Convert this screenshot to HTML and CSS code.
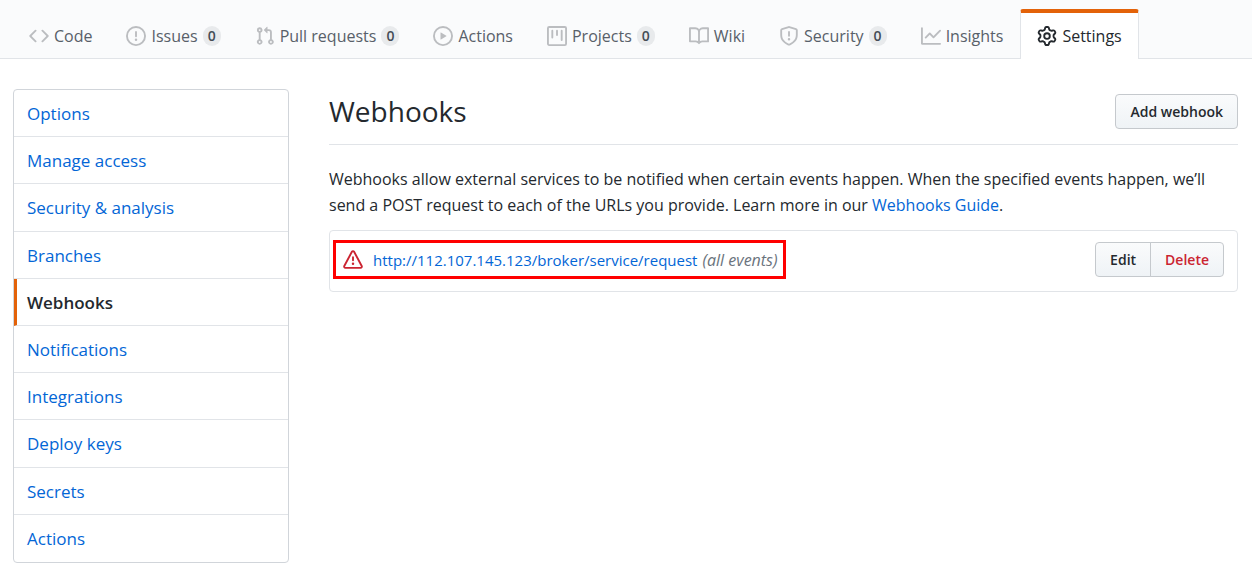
FILE: index.html
```html
<!DOCTYPE html>
<html lang="en">
<head>
<meta charset="utf-8">
<meta name="viewport" content="width=device-width, initial-scale=1">
<title>Webhooks</title>
<link rel="stylesheet" href="styles.css">
</head>
<body>
<nav class="tabs" aria-label="Repository">
  <a class="tab" href="#code"><svg class="icon" viewBox="0 0 16 16" aria-hidden="true"><path d="M4.72 3.22a.75.75 0 011.06 1.06L2.06 8l3.72 3.72a.75.75 0 11-1.06 1.06L.47 8.53a.75.75 0 010-1.06l4.25-4.25zm6.56 0a.75.75 0 10-1.06 1.06L13.94 8l-3.72 3.72a.75.75 0 101.06 1.06l4.25-4.25a.75.75 0 000-1.06l-4.25-4.25z"/></svg><span>Code</span></a>
  <a class="tab" href="#issues"><svg class="icon" viewBox="0 0 16 16" aria-hidden="true"><path fill-rule="evenodd" d="M8 1.5a6.5 6.5 0 100 13 6.5 6.5 0 000-13zM0 8a8 8 0 1116 0A8 8 0 010 8zm9 3a1 1 0 11-2 0 1 1 0 012 0zm-.25-6.25a.75.75 0 00-1.5 0v3.5a.75.75 0 001.5 0v-3.5z"/></svg><span>Issues</span><span class="count">0</span></a>
  <a class="tab" href="#pulls"><svg class="icon" viewBox="0 0 16 16" aria-hidden="true"><path fill-rule="evenodd" d="M7.177 3.073L9.573.677A.25.25 0 0110 .854v4.792a.25.25 0 01-.427.177L7.177 3.427a.25.25 0 010-.354zM3.75 2.5a.75.75 0 100 1.5.75.75 0 000-1.5zm-2.25.75a2.25 2.25 0 113 2.122v5.256a2.251 2.251 0 11-1.5 0V5.372A2.25 2.25 0 011.5 3.25zM11 2.5h-1V4h1a1 1 0 011 1v5.628a2.251 2.251 0 101.5 0V5A2.5 2.5 0 0011 2.5zm1 10.25a.75.75 0 111.5 0 .75.75 0 01-1.5 0zM3.75 12a.75.75 0 100 1.5.75.75 0 000-1.5z"/></svg><span>Pull requests</span><span class="count">0</span></a>
  <a class="tab" href="#actions"><svg class="icon" viewBox="0 0 16 16" aria-hidden="true"><path fill-rule="evenodd" d="M1.5 8a6.5 6.5 0 1113 0 6.5 6.5 0 01-13 0zM8 0a8 8 0 100 16A8 8 0 008 0zM6.379 5.227A.25.25 0 006 5.442v5.117a.25.25 0 00.379.214l4.264-2.559a.25.25 0 000-.428L6.379 5.227z"/></svg><span>Actions</span></a>
  <a class="tab" href="#projects"><svg class="icon" viewBox="0 0 16 16" aria-hidden="true"><path fill-rule="evenodd" d="M1.75 0A1.75 1.75 0 000 1.75v12.5C0 15.216.784 16 1.75 16h12.5A1.75 1.75 0 0016 14.25V1.75A1.75 1.75 0 0014.25 0H1.75zM1.5 1.75a.25.25 0 01.25-.25h12.5a.25.25 0 01.25.25v12.5a.25.25 0 01-.25.25H1.75a.25.25 0 01-.25-.25V1.75zM11.75 3a.75.75 0 00-.75.75v7.5a.75.75 0 001.5 0v-7.5a.75.75 0 00-.75-.75zm-8.25.75a.75.75 0 011.5 0v5.5a.75.75 0 01-1.5 0v-5.5zM8 3a.75.75 0 00-.75.75v3.5a.75.75 0 001.5 0v-3.5A.75.75 0 008 3z"/></svg><span>Projects</span><span class="count">0</span></a>
  <a class="tab" href="#wiki"><svg class="icon" viewBox="0 0 16 16" aria-hidden="true"><path fill-rule="evenodd" d="M0 1.75A.75.75 0 01.75 1h4.253c1.227 0 2.317.59 3 1.501A3.744 3.744 0 0111.006 1h4.245a.75.75 0 01.75.75v10.5a.75.75 0 01-.75.75h-4.507a2.25 2.25 0 00-1.591.659l-.622.621a.75.75 0 01-1.06 0l-.622-.621A2.25 2.25 0 005.258 13H.75a.75.75 0 01-.75-.75V1.75zm8.755 3a2.25 2.25 0 012.25-2.25H14.5v9h-3.757c-.71 0-1.4.201-1.992.572l.004-7.322zm-1.504 7.324l.004-5.073-.002-2.253A2.25 2.25 0 005.003 2.5H1.5v9h3.757a3.75 3.75 0 011.994.574z"/></svg><span>Wiki</span></a>
  <a class="tab" href="#security"><svg class="icon" viewBox="0 0 16 16" aria-hidden="true"><path fill-rule="evenodd" d="M7.467.133a1.75 1.75 0 011.066 0l5.25 1.68A1.75 1.75 0 0115 3.48V7c0 1.566-.32 3.182-1.303 4.682-.983 1.498-2.585 2.813-5.032 3.855a1.7 1.7 0 01-1.33 0c-2.447-1.042-4.049-2.357-5.032-3.855C1.32 10.182 1 8.566 1 7V3.48a1.75 1.75 0 011.217-1.667l5.25-1.68zm.61 1.429a.25.25 0 00-.153 0l-5.25 1.68a.25.25 0 00-.174.238V7c0 1.358.275 2.666 1.057 3.86.784 1.194 2.121 2.34 4.366 3.297a.2.2 0 00.154 0c2.245-.956 3.582-2.104 4.366-3.298C13.225 9.666 13.5 8.36 13.5 7V3.48a.25.25 0 00-.174-.237l-5.25-1.68zM9 10.5a1 1 0 11-2 0 1 1 0 012 0zm-.25-5.75a.75.75 0 10-1.5 0v3a.75.75 0 001.5 0v-3z"/></svg><span>Security</span><span class="count">0</span></a>
  <a class="tab" href="#insights"><svg class="icon" viewBox="0 0 16 16" aria-hidden="true"><path fill-rule="evenodd" d="M1.5 1.75a.75.75 0 00-1.5 0v12.5c0 .414.336.75.75.75h14.5a.75.75 0 000-1.5H1.5V1.75zm14.28 2.53a.75.75 0 00-1.06-1.06L10 7.94 7.53 5.47a.75.75 0 00-1.06 0L3.22 8.72a.75.75 0 001.06 1.06L7 7.06l2.47 2.47a.75.75 0 001.06 0l5.25-5.25z"/></svg><span>Insights</span></a>
  <a class="tab tab-current" href="#settings" aria-current="page"><svg class="icon" viewBox="0 0 16 16" aria-hidden="true"><path fill-rule="evenodd" d="M7.429 1.525a6.593 6.593 0 011.142 0c.036.003.108.036.137.146l.289 1.105c.147.56.55.967.997 1.189.174.086.341.183.501.29.417.278.97.423 1.53.27l1.102-.303c.11-.03.175.016.195.046.219.31.41.641.573.989.014.031.022.11-.059.19l-.815.806c-.411.406-.562.957-.53 1.456a4.588 4.588 0 010 .582c-.032.499.119 1.05.53 1.456l.815.806c.08.08.073.159.059.19a6.494 6.494 0 01-.573.99c-.02.029-.086.074-.195.045l-1.103-.303c-.559-.153-1.112-.008-1.529.27-.16.107-.327.204-.5.29-.449.222-.851.628-.998 1.189l-.289 1.105c-.029.11-.101.143-.137.146a6.613 6.613 0 01-1.142 0c-.036-.003-.108-.037-.137-.146l-.289-1.105c-.147-.56-.55-.967-.997-1.189a4.502 4.502 0 01-.501-.29c-.417-.278-.97-.423-1.53-.27l-1.102.303c-.11.03-.175-.016-.195-.046a6.492 6.492 0 01-.573-.989c-.014-.031-.022-.11.059-.19l.815-.806c.411-.406.562-.957.53-1.456a4.587 4.587 0 010-.582c.032-.499-.119-1.05-.53-1.456l-.815-.806c-.08-.08-.073-.159-.059-.19a6.44 6.44 0 01.573-.99c.02-.029.086-.075.195-.045l1.103.303c.559.153 1.112.008 1.529-.27.16-.107.327-.204.5-.29.449-.222.851-.628.998-1.189l.289-1.105c.029-.11.101-.143.137-.146zM8 0c-.236 0-.47.01-.701.03-.743.065-1.29.615-1.458 1.261l-.29 1.106c-.017.066-.078.158-.211.224a5.994 5.994 0 00-.668.386c-.123.082-.233.09-.3.071L3.27 2.776c-.644-.177-1.392.02-1.82.63a7.977 7.977 0 00-.704 1.217c-.315.675-.111 1.422.363 1.891l.815.806c.05.048.098.147.088.294a6.084 6.084 0 000 .772c.01.147-.038.246-.088.294l-.815.806c-.474.469-.678 1.216-.363 1.891.2.428.436.835.704 1.218.428.609 1.176.806 1.82.63l1.103-.303c.066-.019.176-.011.299.071.213.143.436.272.668.386.133.066.194.158.212.224l.289 1.106c.169.646.715 1.196 1.458 1.26a8.094 8.094 0 001.402 0c.743-.064 1.29-.614 1.458-1.26l.29-1.106c.017-.066.078-.158.211-.224a5.98 5.98 0 00.668-.386c.123-.082.233-.09.3-.071l1.102.302c.644.177 1.392-.02 1.82-.63.268-.382.505-.789.704-1.217.315-.675.111-1.422-.364-1.891l-.814-.806c-.05-.048-.098-.147-.088-.294a6.1 6.1 0 000-.772c-.01-.147.039-.246.088-.294l.814-.806c.475-.469.679-1.216.364-1.891a7.992 7.992 0 00-.704-1.218c-.428-.609-1.176-.806-1.82-.63l-1.103.303c-.066.019-.176.011-.299-.071a5.991 5.991 0 00-.668-.386c-.133-.066-.194-.158-.212-.224L10.16 1.29C9.99.645 9.444.095 8.701.031A8.094 8.094 0 008 0zm1.5 8a1.5 1.5 0 11-3 0 1.5 1.5 0 013 0zM11 8a3 3 0 11-6 0 3 3 0 016 0z"/></svg><span>Settings</span></a>
</nav>
<div class="layout">
  <nav class="menu" aria-label="Settings">
    <a class="menu-item" href="#options">Options</a>
    <a class="menu-item" href="#access">Manage access</a>
    <a class="menu-item" href="#analysis">Security &amp; analysis</a>
    <a class="menu-item" href="#branches">Branches</a>
    <a class="menu-item menu-current" href="#webhooks" aria-current="page">Webhooks</a>
    <a class="menu-item" href="#notifications">Notifications</a>
    <a class="menu-item" href="#integrations">Integrations</a>
    <a class="menu-item" href="#keys">Deploy keys</a>
    <a class="menu-item" href="#secrets">Secrets</a>
    <a class="menu-item" href="#actions-settings">Actions</a>
  </nav>
  <main class="content">
    <header class="subhead">
      <h1 class="title">Webhooks</h1>
      <button class="button" type="button">Add webhook</button>
    </header>
    <p class="intro">Webhooks allow external services to be notified when certain events happen. When the specified events happen, we’ll send a POST request to each of the URLs you provide. Learn more in our <a class="link" href="#guide">Webhooks Guide</a>.</p>
    <div class="hook">
      <div class="hook-info">
        <svg class="icon icon-alert" viewBox="0 0 16 16" role="img" aria-label="Failed delivery"><path fill-rule="evenodd" d="M8.22 1.754a.25.25 0 00-.44 0L1.698 13.132a.25.25 0 00.22.368h12.164a.25.25 0 00.22-.368L8.22 1.754zm-1.763-.707c.659-1.234 2.427-1.234 3.086 0l6.082 11.378A1.75 1.75 0 0114.082 15H1.918a1.75 1.75 0 01-1.543-2.575L6.457 1.047zM9 11a1 1 0 11-2 0 1 1 0 012 0zm-.25-5.25a.75.75 0 00-1.5 0v2.5a.75.75 0 001.5 0v-2.5z"/></svg>
        <a class="link hook-url" href="#hook">http://112.107.145.123/broker/service/request</a>
        <em class="events">(all events)</em>
      </div>
      <div class="group">
        <button class="button" type="button">Edit</button>
        <button class="button button-danger" type="button">Delete</button>
      </div>
    </div>
  </main>
</div>
</body>
</html>
```
FILE: styles.css
```css
* { box-sizing: border-box; }

body {
  margin: 0;
  background: #fff;
  color: #24292e;
  font: 16px/26px "Open Sans", "Noto Sans", sans-serif;
}

a { text-decoration: none; }

.icon {
  flex: none;
  width: 20px;
  height: 20px;
  fill: currentColor;
}

.tabs {
  display: flex;
  align-items: flex-end;
  padding: 9px 12px 0;
  background: #fafbfc;
  box-shadow: inset 0 -1px #e1e4e8;
}

.tab {
  display: flex;
  align-items: center;
  gap: 5px;
  height: 50px;
  padding: 4px 16px 0;
  border: solid transparent;
  border-width: 0 1px;
  color: #586069;
  white-space: nowrap;
}

.tab .icon { color: #bbbdc0; }

.tab-current {
  padding-top: 0;
  border-color: #e1e4e8;
  border-top: 4px solid #e36209;
  border-radius: 3px 3px 0 0;
  background: #fff;
  color: #24292e;
}

.tab-current .icon { color: #24292e; }

.count {
  min-width: 18px;
  padding: 0 5px;
  border-radius: 20px;
  background: #e8eaec;
  color: #444d56;
  font-size: 14px;
  font-weight: 600;
  line-height: 20px;
  text-align: center;
}

.layout {
  display: grid;
  grid-template-columns: 276px minmax(0, 1fr);
  gap: 40px;
  align-items: start;
  padding: 30px 14px 10px 13px;
}

.menu {
  display: grid;
  grid-auto-rows: 1fr;
  min-height: 474px;
  overflow: hidden;
  border: 1px solid #d1d5da;
  border-radius: 4px;
  font-size: 17px;
}

.menu-item {
  display: flex;
  align-items: center;
  padding: 11px 13px 9px;
  border-bottom: 1px solid #e1e4e8;
  color: #0366d6;
}

.menu-item:last-child { border-bottom: 0; }

.menu-current {
  padding-left: 10px;
  border-left: 3px solid #e36209;
  color: #24292e;
  font-weight: 600;
}

.subhead {
  display: flex;
  align-items: center;
  justify-content: space-between;
  padding: 5px 0 15px;
  border-bottom: 1px solid #e1e4e8;
}

.title {
  margin: 0;
  font-size: 28px;
  font-weight: 400;
  line-height: 35px;
}

.button {
  padding: 4px 14px;
  border: 1px solid #c5c9cd;
  border-radius: 4px;
  background: linear-gradient(#fafbfc, #eff3f6);
  color: #24292e;
  font: inherit;
  font-size: 14px;
  font-weight: 600;
  line-height: 25px;
}

.button-danger { color: #cb2431; }

.intro { margin: 21px 0 12px; }

.link { color: #0366d6; }

.hook {
  display: flex;
  align-items: center;
  justify-content: space-between;
  padding: 9px 13px 12px 3px;
  border: 1px solid #e1e4e8;
  border-radius: 4px;
}

.hook-info {
  display: flex;
  align-items: center;
  padding: 4px 5px 3px 7px;
  border: 3px solid #f00;
}

.hook-url { font-size: 15px; }

.icon-alert {
  margin-right: 10px;
  color: #cb2431;
}

.events {
  margin-left: 5px;
  color: #6a737d;
}

.group { display: flex; }

.group .button:first-child { border-radius: 4px 0 0 4px; }

.group .button:last-child {
  margin-left: -1px;
  border-radius: 0 4px 4px 0;
}
```
